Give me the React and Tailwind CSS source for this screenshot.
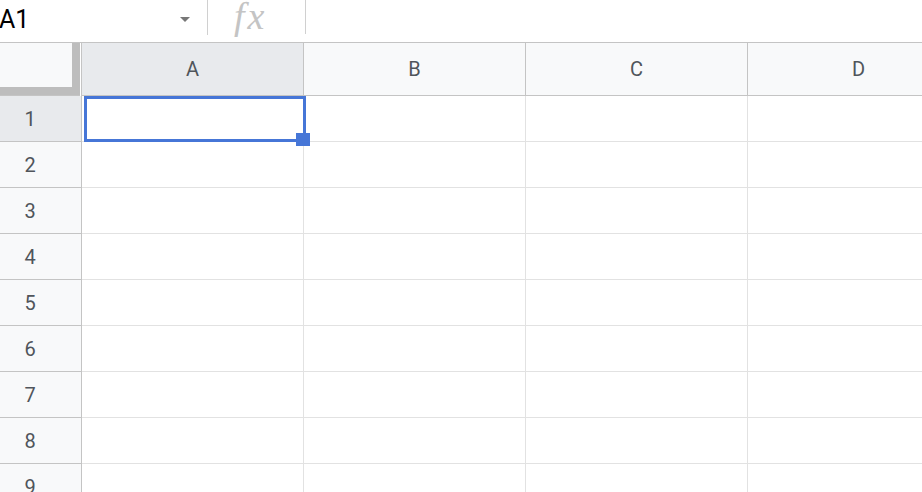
import React from "react";

const cols = ["A", "B", "C", "D"];
const rows = [1, 2, 3, 4, 5, 6, 7, 8, 9];

export default function App() {
  return (
    <div
      className="w-[922px] h-[492px] overflow-hidden bg-white"
      style={{ fontFamily: "Roboto, 'Liberation Sans', Arial, sans-serif" }}
    >
      {/* formula bar */}
      <div className="h-[43px] flex items-start border-b border-[#c4c4c4]">
        <div className="w-[207px] h-[42px] flex items-center justify-between pr-[17px]">
          <span className="text-[25px] leading-none text-black -ml-px mt-[-4px]">A1</span>
          <svg width="10" height="6" viewBox="0 0 10 6" className="mt-[-3px]">
            <path d="M0 0 L10 0 L5 5 Z" fill="#777" />
          </svg>
        </div>
        <div className="w-px h-[35px] bg-[#d0d0d0]" />
        <div className="w-[97px] h-[35px] flex items-start pl-[26px]">
          <span
            className="text-[38px] leading-none italic text-[#c4c4c4] mt-[-3px] tracking-[3px]"
            style={{ fontFamily: "'Liberation Serif', 'DejaVu Serif', serif" }}
          >
            fx
          </span>
        </div>
        <div className="w-px h-[34px] bg-[#d0d0d0]" />
      </div>

      {/* header row */}
      <div className="flex h-[53px]">
        <div className="w-[82px] shrink-0 flex border-r border-[#c4c4c4]">
          <div className="w-[80px] h-[53px] flex flex-col">
            <div className="flex h-[44px]">
              <div className="w-[72px] bg-[#f8f9fa]" />
              <div className="w-[8px] bg-[#bdbdbd]" />
            </div>
            <div className="h-[8px] bg-[#bdbdbd]" />
            <div className="h-px bg-[#c4c4c4]" />
          </div>
          <div className="w-px h-[53px] bg-white" />
        </div>
        {cols.map((c, i) => (
          <div
            key={c}
            className={`w-[222px] shrink-0 h-[53px] flex items-center justify-center border-r border-b border-[#c4c4c4] text-[20px] text-[#50555b] ${
              i === 0 ? "bg-[#e8eaed]" : "bg-[#f8f9fa]"
            }`}
          >
            {c}
          </div>
        ))}
      </div>

      {/* body rows */}
      {rows.map((r) => (
        <div key={r} className="flex h-[46px]">
          <div
            className={`w-[82px] shrink-0 h-[46px] flex items-center justify-center pr-[21px] border-r border-b border-[#c4c4c4] text-[20px] text-[#50555b] ${
              r === 1 ? "bg-[#e8eaed]" : "bg-[#f8f9fa]"
            }`}
          >
            {r}
          </div>
          {cols.map((c, i) => (
            <div
              key={c}
              className="relative w-[222px] shrink-0 h-[46px] border-r border-b border-[#e2e2e2]"
            >
              {r === 1 && i === 0 && (
                <>
                  <div className="absolute left-[2px] top-0 w-[222px] h-[46px] border-[3px] border-[#4676d7]" />
                  <div className="absolute left-[214px] top-[37px] w-[14px] h-[13px] bg-[#4676d7] z-10" />
                </>
              )}
            </div>
          ))}
        </div>
      ))}
    </div>
  );
}
